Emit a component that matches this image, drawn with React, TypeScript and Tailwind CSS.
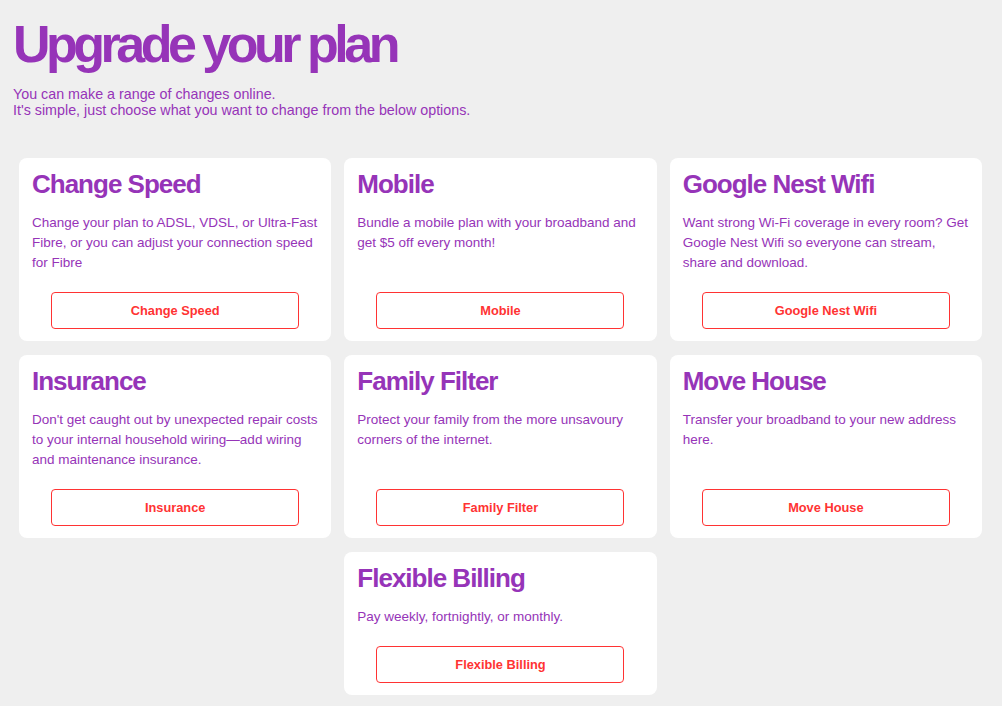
const options = [
  {
    title: 'Change Speed',
    text: 'Change your plan to ADSL, VDSL, or Ultra-Fast Fibre, or you can adjust your connection speed for Fibre',
  },
  {
    title: 'Mobile',
    text: 'Bundle a mobile plan with your broadband and get $5 off every month!',
  },
  {
    title: 'Google Nest Wifi',
    text: 'Want strong Wi-Fi coverage in every room? Get Google Nest Wifi so everyone can stream, share and download.',
  },
  {
    title: 'Insurance',
    text: "Don't get caught out by unexpected repair costs to your internal household wiring\u2014add wiring and maintenance insurance.",
  },
  {
    title: 'Family Filter',
    text: 'Protect your family from the more unsavoury corners of the internet.',
  },
  {
    title: 'Move House',
    text: 'Transfer your broadband to your new address here.',
  },
  {
    title: 'Flexible Billing',
    text: 'Pay weekly, fortnightly, or monthly.',
  },
];

function OptionCard({ title, text, last }: { title: string; text: string; last?: boolean }) {
  return (
    <div
      className={`flex flex-col bg-white rounded-lg px-[13px] pt-[11px] pb-[12px] ${
        last ? 'col-start-2' : ''
      }`}
    >
      <h2 className="text-[26px] leading-[30px] font-bold tracking-[-1px] text-[#9634b8]">{title}</h2>
      <p className="mt-[14px] text-[13.5px] leading-[20px] text-[#9634b8]">{text}</p>
      {/* button pinned to card bottom */}
      <div className="mt-auto pt-[19px] flex justify-center">
        <button
          type="button"
          className="w-[248px] h-[37px] border border-[#ff3333] rounded text-[12.8px] font-bold text-[#ff3333] bg-white"
        >
          {title}
        </button>
      </div>
    </div>
  );
}

export default function App() {
  return (
    <div className="min-h-screen bg-[#efefef] font-['Liberation_Sans',Arial,sans-serif]">
      <div className="px-[13px] pt-[18px]">
        <h1 className="text-[52px] leading-[52px] font-bold tracking-[-4.5px] text-[#9634b8]">Upgrade your plan</h1>
        <p className="mt-[16px] text-[14.3px] leading-[16px] text-[#9634b8]">
          You can make a range of changes online.
          <br />
          It's simple, just choose what you want to change from the below options.
        </p>
      </div>

      <div className="grid grid-cols-3 gap-x-[13px] gap-y-[14px] pl-[19px] pr-[20px] pt-[40px] pb-[10px]">
        {options.map((o, i) => (
          <OptionCard key={o.title} title={o.title} text={o.text} last={i === options.length - 1} />
        ))}
      </div>
    </div>
  );
}
